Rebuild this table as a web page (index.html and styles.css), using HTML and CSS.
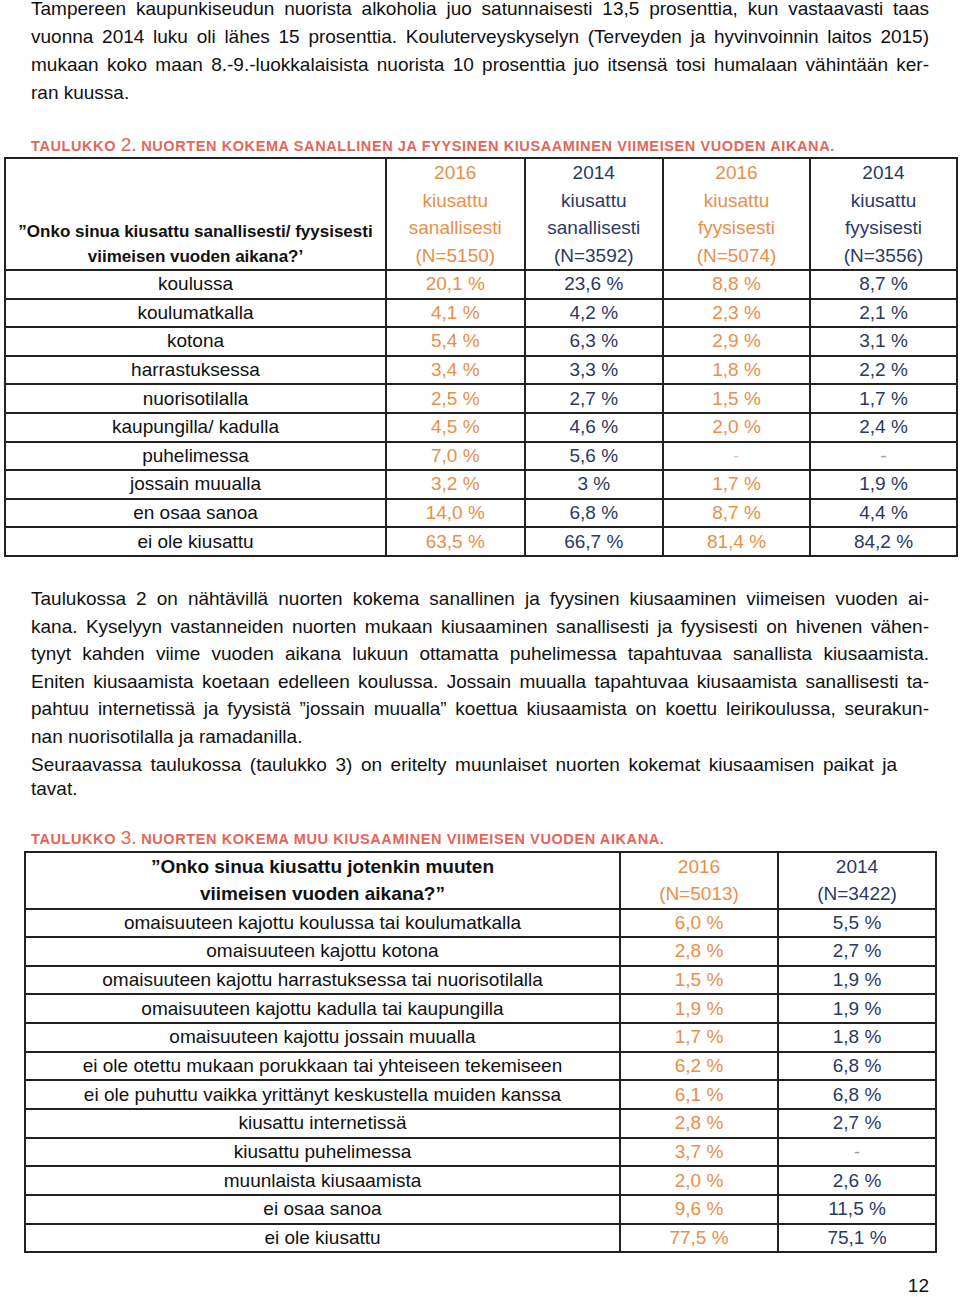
FILE: index.html
```html
<!DOCTYPE html>
<html lang="fi">
<head>
<meta charset="utf-8">
<title>Taulukot 2 ja 3</title>
<link rel="stylesheet" href="styles.css">
</head>
<body>
<div class="page">
  <p class="para p1">
    <span class="ln">Tampereen kaupunkiseudun nuorista alkoholia juo satunnaisesti 13,5 prosenttia, kun vastaavasti taas</span>
    <span class="ln">vuonna 2014 luku oli lähes 15 prosenttia. Kouluterveyskyselyn (Terveyden ja hyvinvoinnin laitos 2015)</span>
    <span class="ln">mukaan koko maan 8.-9.-luokkalaisista nuorista 10 prosenttia juo itsensä tosi humalaan vähintään ker-</span>
    <span class="ln last">ran kuussa.</span>
  </p>

  <div class="caption cap2">TAULUKKO <span class="num">2</span>. NUORTEN KOKEMA SANALLINEN JA FYYSINEN KIUSAAMINEN VIIMEISEN VUODEN AIKANA.</div>

  <table class="tbl t2">
    <colgroup>
      <col class="c-q2"><col class="c-n2"><col class="c-n2"><col class="c-n3"><col class="c-n3">
    </colgroup>
    <thead>
      <tr class="head">
        <th class="q">”Onko sinua kiusattu sanallisesti/ fyysisesti<br>viimeisen vuoden aikana?’</th>
        <th class="o">2016<br>kiusattu<br>sanallisesti<br>(N=5150)</th>
        <th class="b">2014<br>kiusattu<br>sanallisesti<br>(N=3592)</th>
        <th class="o">2016<br>kiusattu<br>fyysisesti<br>(N=5074)</th>
        <th class="b">2014<br>kiusattu<br>fyysisesti<br>(N=3556)</th>
      </tr>
    </thead>
    <tbody>
      <tr><td>koulussa</td><td class="o">20,1 %</td><td class="b">23,6 %</td><td class="o">8,8 %</td><td class="b">8,7 %</td></tr>
      <tr><td>koulumatkalla</td><td class="o">4,1 %</td><td class="b">4,2 %</td><td class="o">2,3 %</td><td class="b">2,1 %</td></tr>
      <tr><td>kotona</td><td class="o">5,4 %</td><td class="b">6,3 %</td><td class="o">2,9 %</td><td class="b">3,1 %</td></tr>
      <tr><td>harrastuksessa</td><td class="o">3,4 %</td><td class="b">3,3 %</td><td class="o">1,8 %</td><td class="b">2,2 %</td></tr>
      <tr><td>nuorisotilalla</td><td class="o">2,5 %</td><td class="b">2,7 %</td><td class="o">1,5 %</td><td class="b">1,7 %</td></tr>
      <tr><td>kaupungilla/ kadulla</td><td class="o">4,5 %</td><td class="b">4,6 %</td><td class="o">2,0 %</td><td class="b">2,4 %</td></tr>
      <tr><td>puhelimessa</td><td class="o">7,0 %</td><td class="b">5,6 %</td><td class="o dash">-</td><td class="b dash">-</td></tr>
      <tr><td>jossain muualla</td><td class="o">3,2 %</td><td class="b">3 %</td><td class="o">1,7 %</td><td class="b">1,9 %</td></tr>
      <tr><td>en osaa sanoa</td><td class="o">14,0 %</td><td class="b">6,8 %</td><td class="o">8,7 %</td><td class="b">4,4 %</td></tr>
      <tr><td>ei ole kiusattu</td><td class="o">63,5 %</td><td class="b">66,7 %</td><td class="o">81,4 %</td><td class="b">84,2 %</td></tr>
    </tbody>
  </table>

  <p class="para p2">
    <span class="ln">Taulukossa 2 on nähtävillä nuorten kokema sanallinen ja fyysinen kiusaaminen viimeisen vuoden ai-</span>
    <span class="ln">kana. Kyselyyn vastanneiden nuorten mukaan kiusaaminen sanallisesti ja fyysisesti on hivenen vähen-</span>
    <span class="ln">tynyt kahden viime vuoden aikana lukuun ottamatta puhelimessa tapahtuvaa sanallista kiusaamista.</span>
    <span class="ln">Eniten kiusaamista koetaan edelleen koulussa. Jossain muualla tapahtuvaa kiusaamista sanallisesti ta-</span>
    <span class="ln">pahtuu internetissä ja fyysistä ”jossain muualla” koettua kiusaamista on koettu leirikoulussa, seurakun-</span>
    <span class="ln last">nan nuorisotilalla ja ramadanilla.</span>
  </p>
  <p class="para p3">
    <span class="ln short">Seuraavassa taulukossa (taulukko 3) on eritelty muunlaiset nuorten kokemat kiusaamisen paikat ja</span>
    <span class="ln last">tavat.</span>
  </p>

  <div class="caption cap3">TAULUKKO <span class="num">3</span>. NUORTEN KOKEMA MUU KIUSAAMINEN VIIMEISEN VUODEN AIKANA.</div>

  <table class="tbl t3">
    <colgroup>
      <col class="c-q3"><col class="c-v3"><col class="c-v3">
    </colgroup>
    <thead>
      <tr class="head">
        <th class="q">”Onko sinua kiusattu jotenkin muuten<br>viimeisen vuoden aikana?”</th>
        <th class="o">2016<br>(N=5013)</th>
        <th class="b">2014<br>(N=3422)</th>
      </tr>
    </thead>
    <tbody>
      <tr><td>omaisuuteen kajottu koulussa tai koulumatkalla</td><td class="o">6,0 %</td><td class="b">5,5 %</td></tr>
      <tr><td>omaisuuteen kajottu kotona</td><td class="o">2,8 %</td><td class="b">2,7 %</td></tr>
      <tr><td>omaisuuteen kajottu harrastuksessa tai nuorisotilalla</td><td class="o">1,5 %</td><td class="b">1,9 %</td></tr>
      <tr><td>omaisuuteen kajottu kadulla tai kaupungilla</td><td class="o">1,9 %</td><td class="b">1,9 %</td></tr>
      <tr><td>omaisuuteen kajottu jossain muualla</td><td class="o">1,7 %</td><td class="b">1,8 %</td></tr>
      <tr><td>ei ole otettu mukaan porukkaan tai yhteiseen tekemiseen</td><td class="o">6,2 %</td><td class="b">6,8 %</td></tr>
      <tr><td>ei ole puhuttu vaikka yrittänyt keskustella muiden kanssa</td><td class="o">6,1 %</td><td class="b">6,8 %</td></tr>
      <tr><td>kiusattu internetissä</td><td class="o">2,8 %</td><td class="b">2,7 %</td></tr>
      <tr><td>kiusattu puhelimessa</td><td class="o">3,7 %</td><td class="b dash">-</td></tr>
      <tr><td>muunlaista kiusaamista</td><td class="o">2,0 %</td><td class="b">2,6 %</td></tr>
      <tr><td>ei osaa sanoa</td><td class="o">9,6 %</td><td class="b">11,5 %</td></tr>
      <tr><td>ei ole kiusattu</td><td class="o">77,5 %</td><td class="b">75,1 %</td></tr>
    </tbody>
  </table>

  <div class="pagenum">12</div>
</div>
</body>
</html>
```

FILE: styles.css
```css
html, body {
  margin: 0;
  padding: 0;
  background: #ffffff;
}

body {
  font-family: "Liberation Sans", Arial, sans-serif;
  color: #111111;
  font-size: 19px;
}

.page {
  width: 960px;
  display: flex;
  flex-direction: column;
}

.para {
  margin: 0 31px;
  width: 898px;
}

.ln {
  display: block;
  text-align: justify;
  text-align-last: justify;
}

.ln.last {
  text-align: left;
  text-align-last: left;
}

.ln.short {
  width: 866px;
}

.p1 {
  margin-top: -5px;
  line-height: 28px;
}

.p2 {
  margin-top: 28px;
  line-height: 27.6px;
}

.p3 {
  margin-top: 2px;
  line-height: 24px;
}

.caption {
  margin-left: 31px;
  font-weight: bold;
  font-size: 14.5px;
  line-height: 20px;
  height: 20px;
  color: #e2675b;
  white-space: nowrap;
  letter-spacing: 0.6px;
}

.caption .num {
  font-size: 19px;
  font-weight: normal;
  line-height: 0;
}

.cap2 {
  margin-top: 29px;
}

.cap3 {
  margin-top: 28px;
}

.tbl {
  border-collapse: collapse;
  table-layout: fixed;
  margin-top: 1px;
}

.tbl th,
.tbl td {
  border: 2px solid #222222;
  padding: 0;
  text-align: center;
  vertical-align: middle;
  font-weight: normal;
  white-space: nowrap;
}

.tbl td {
  height: 26.6px;
  line-height: 26px;
}

.t2 {
  margin-left: 4px;
  width: 952px;
}

.c-q2 { width: 381px; }
.c-n2 { width: 138.5px; }
.c-n3 { width: 147px; }

.t2 .head th {
  height: 110px;
  line-height: 27.5px;
}

.t2 .head th.q {
  font-weight: bold;
  font-size: 17px;
  line-height: 25px;
  vertical-align: bottom;
  padding-bottom: 0;
  color: #111111;
}

.t3 {
  margin-left: 24px;
  width: 911px;
  margin-top: 2px;
}

.c-q3 { width: 595px; }
.c-v3 { width: 158px; }

.t3 .head th {
  height: 53px;
  line-height: 27.5px;
}

.t3 .head th.q {
  font-weight: bold;
  font-size: 19px;
  color: #111111;
}

.t3 td {
  height: 26.67px;
}

.o { color: #e8904a; }
.b { color: #2b3a64; }

.dash.o { color: #f2c5a2; }
.dash.b { color: #9aa2b5; }

.pagenum {
  margin: 23px 31px 0 31px;
  width: 898px;
  text-align: right;
  line-height: 20px;
}
```
